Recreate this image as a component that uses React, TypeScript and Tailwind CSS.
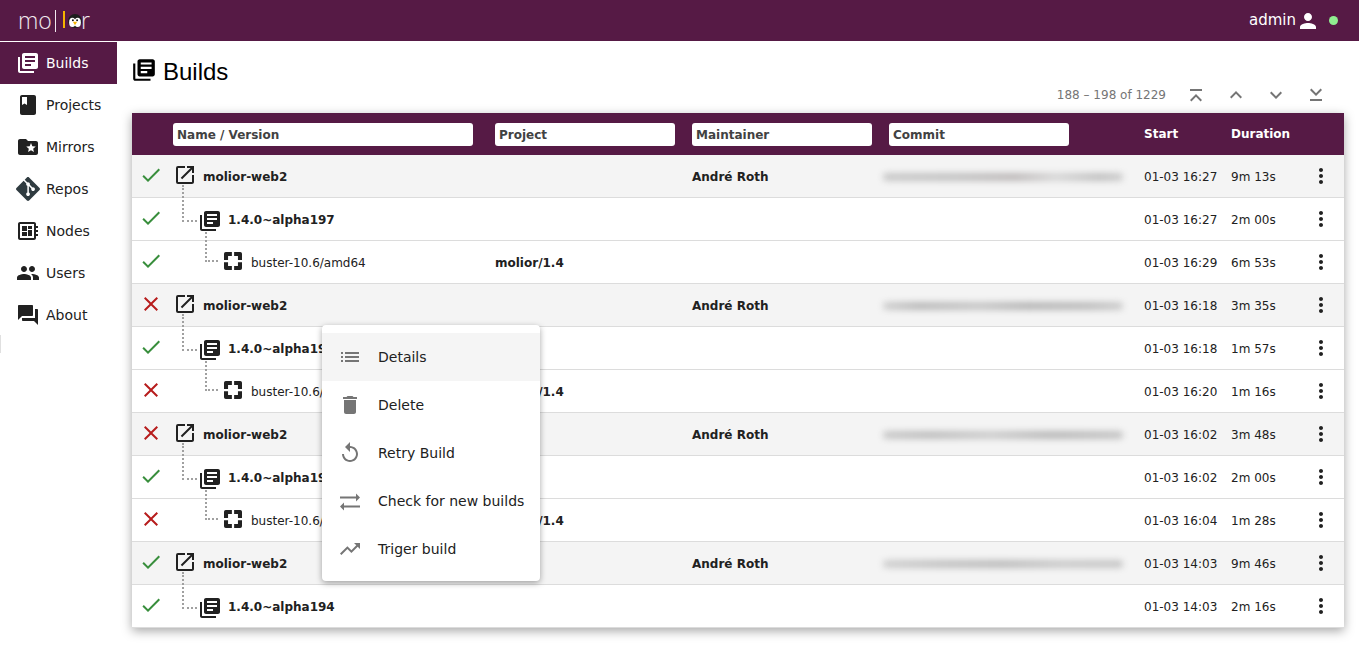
import type { ReactNode } from "react";
import {
  MdLibraryBooks,
  MdBook,
  MdFolderSpecial,
  MdDeveloperBoard,
  MdPeople,
  MdQuestionAnswer,
  MdOpenInNew,
  MdCheck,
  MdClose,
  MdMoreVert,
  MdList,
  MdDelete,
  MdReplay,
  MdTrendingUp,
  MdPerson,
  MdKeyboardArrowUp,
  MdKeyboardArrowDown,
  MdFirstPage,
  MdLastPage,
} from "react-icons/md";
import { SiGit } from "react-icons/si";

const Logo = () => (
  <div className="flex h-[41px] items-center text-[23px] leading-none text-[#f1e9ee] font-['Open_Sans',sans-serif] font-light">
    <span className="w-[32px]">mo</span>
    <span className="ml-[5px] h-[22px] w-px bg-[#f1e9ee]" />
    <span className="ml-[7px] mt-[-2px] h-[17px] w-[2px] bg-[#f5b400]" />
    <svg viewBox="0 0 20 20" className="ml-[3px] mt-[1px] h-[14px] w-[14px]">
      <circle cx="10" cy="10" r="10" fill="#1d1d1d" />
      <ellipse cx="6.2" cy="12" rx="4.6" ry="6.5" fill="#fff" />
      <ellipse cx="13.8" cy="12" rx="4.6" ry="6.5" fill="#fff" />
      <circle cx="7" cy="9" r="1.4" fill="#111" />
      <circle cx="13" cy="9" r="1.4" fill="#111" />
      <path d="M7 11h6l-3 5z" fill="#f5b400" />
    </svg>
    <span className="ml-[-1px]">r</span>
  </div>
);

const nav = [
  { label: "Builds", icon: <MdLibraryBooks size={24} />, active: true },
  { label: "Projects", icon: <MdBook size={24} /> },
  { label: "Mirrors", icon: <MdFolderSpecial size={24} /> },
  { label: "Repos", icon: <SiGit size={24} className="text-[#2f3b40]" /> },
  { label: "Nodes", icon: <MdDeveloperBoard size={24} /> },
  { label: "Users", icon: <MdPeople size={24} /> },
  { label: "About", icon: <MdQuestionAnswer size={24} /> },
];

type Kind = "source" | "version" | "deb";

type Row = {
  ok: boolean;
  kind: Kind;
  name: string;
  project?: string;
  maintainer?: string;
  start: string;
  duration: string;
  smear?: string;
};

// redacted commit hashes, each one smears a little differently
const smearA = "bg-[linear-gradient(90deg,#c8c8c8,#c2c2c2_30%,#bdb9b9_55%,#d6d6d6_72%,#c0c0c0_90%,#cccccc)]";
const smearB = "bg-[linear-gradient(90deg,#cfcfcf,#b9b9b9_15%,#c6c6c6_40%,#b6b6b6_60%,#bcbcbc_85%,#cccccc)]";
const smearC = "bg-[linear-gradient(90deg,#c9c9c9,#bdbdbd_20%,#cccccc_45%,#b8b8b8_70%,#c4c4c4)]";
const smearD = "bg-[linear-gradient(90deg,#cfcfcf,#c2c2c2_25%,#bcbcbc_50%,#cacaca_75%,#c6c6c6)]";

const rows: Row[] = [
  { ok: true, kind: "source", name: "molior-web2", maintainer: "André Roth", start: "01-03 16:27", duration: "9m 13s", smear: smearA },
  { ok: true, kind: "version", name: "1.4.0~alpha197", start: "01-03 16:27", duration: "2m 00s" },
  { ok: true, kind: "deb", name: "buster-10.6/amd64", project: "molior/1.4", start: "01-03 16:29", duration: "6m 53s" },
  { ok: false, kind: "source", name: "molior-web2", maintainer: "André Roth", start: "01-03 16:18", duration: "3m 35s", smear: smearB },
  { ok: true, kind: "version", name: "1.4.0~alpha196", start: "01-03 16:18", duration: "1m 57s" },
  { ok: false, kind: "deb", name: "buster-10.6/amd64", project: "molior/1.4", start: "01-03 16:20", duration: "1m 16s" },
  { ok: false, kind: "source", name: "molior-web2", maintainer: "André Roth", start: "01-03 16:02", duration: "3m 48s", smear: smearC },
  { ok: true, kind: "version", name: "1.4.0~alpha195", start: "01-03 16:02", duration: "2m 00s" },
  { ok: false, kind: "deb", name: "buster-10.6/amd64", project: "molior/1.4", start: "01-03 16:04", duration: "1m 28s" },
  { ok: true, kind: "source", name: "molior-web2", maintainer: "André Roth", start: "01-03 14:03", duration: "9m 46s", smear: smearD },
  { ok: true, kind: "version", name: "1.4.0~alpha194", start: "01-03 14:03", duration: "2m 16s" },
];

const cols = "grid grid-cols-[41px_322px_197px_197px_255px_87px_78px_1fr] items-center";

const DebIcon = () => (
  <svg viewBox="0 0 20 20" className="mb-[4px] h-[18px] w-[18px] text-[#212121]">
    <path
      fill="currentColor"
      fillRule="evenodd"
      d="M2 0h16a2 2 0 0 1 2 2v16a2 2 0 0 1-2 2H2a2 2 0 0 1-2-2V2a2 2 0 0 1 2-2zM8.75 0v4.5H4.5v4.25H0v2.5h4.5v4.25h4.25V20h2.5v-4.5h4.25v-4.25H20v-2.5h-4.5V4.5h-4.25V0z"
    />
  </svg>
);

const SwapIcon = () => (
  <svg viewBox="0 0 24 24" className="h-[24px] w-[24px]" fill="currentColor">
    <path d="M2 7.5h16V4.5l4 4-4 4V9.5H2zM22 16.5H6v-3l-4 4 4 4v-3h16z" />
  </svg>
);

const NameCell = ({ row }: { row: Row }) => {
  if (row.kind === "source") {
    return (
      <div className="relative flex items-center">
        <MdOpenInNew size={24} className="mb-[4px] text-[#212121]" />
        <span className="ml-[6px] font-bold text-[#212121]">{row.name}</span>
      </div>
    );
  }
  if (row.kind === "version") {
    return (
      <div className="relative flex items-center pl-[25px]">
        <span className="absolute left-[9px] top-[-22px] h-[37px] w-[15px] border-b-2 border-l-2 border-dotted border-[#a0a0a0]" />
        <MdLibraryBooks size={24} className="mt-[2px] text-[#212121]" />
        <span className="ml-[6px] font-bold text-[#212121]">{row.name}</span>
      </div>
    );
  }
  return (
    <div className="relative flex items-center pl-[51px]">
      <span className="absolute left-[32px] top-[-20px] h-[30px] w-[13px] border-b-2 border-l-2 border-dotted border-[#a0a0a0]" />
      <DebIcon />
      <span className="ml-[9px] text-[#212121]">{row.name}</span>
    </div>
  );
};

const MenuItem = ({ icon, label, hover }: { icon: ReactNode; label: string; hover?: boolean }) => (
  <div className={`flex h-[48px] items-center pl-[16px] ${hover ? "bg-[#f5f5f5]" : ""}`}>
    <span className="flex w-[40px] text-[#757575]">{icon}</span>
    <span className="text-[14px] text-[#212121]">{label}</span>
  </div>
);

export default function App() {
  return (
    <div className="relative h-[650px] w-[1359px] overflow-hidden bg-white font-['DejaVu_Sans',sans-serif] text-[#212121]">
      <header className="flex h-[41px] items-center justify-between bg-[#561a45] pl-[18px] pr-[21px]">
        <Logo />
        <div className="flex items-center text-white">
          <span className="text-[15px]">admin</span>
          <MdPerson size={24} className="ml-0" />
          <span className="ml-[9px] h-[9px] w-[9px] rounded-full bg-[#90ee90]" />
        </div>
      </header>

      <div className="flex">
        <aside className="w-[117px] shrink-0 pt-px">
          {nav.map((n) => (
            <div
              key={n.label}
              className={`flex h-[42px] items-center pl-[16px] text-[14px] ${n.active ? "bg-[#561a45] text-white" : "text-[#212121]"}`}
            >
              <span className="flex w-[30px]">{n.icon}</span>
              {n.label}
            </div>
          ))}
        </aside>

        <main className="flex-1 pl-[15px] pr-[15px]">
          <div className="flex h-[44px] items-center pt-[17px] text-black">
            <MdLibraryBooks size={26} className="mb-[4px] ml-[-1px]" />
            <h1 className="ml-[6px] text-[24px] font-normal font-['Liberation_Sans',sans-serif]">Builds</h1>
          </div>

          <div className="flex h-[28px] items-center justify-end pb-[8px] pr-[8px] text-[12px] text-[#757575]">
            <span className="mr-[10px]">188 – 198 of 1229</span>
            <span className="flex w-[40px] justify-center"><MdFirstPage size={24} className="rotate-90" /></span>
            <span className="flex w-[40px] justify-center"><MdKeyboardArrowUp size={24} /></span>
            <span className="flex w-[40px] justify-center"><MdKeyboardArrowDown size={24} /></span>
            <span className="flex w-[40px] justify-center"><MdLastPage size={24} className="rotate-90" /></span>
          </div>

          <div className="shadow-[0_3px_10px_rgba(0,0,0,0.35)]">
            <div className={`${cols} h-[42px] bg-[#561a45] text-[12px] font-bold`}>
              <span />
              <div className="h-[23px] w-[300px] rounded-[3px] bg-white pl-[4px] leading-[24px] text-[#424242]">Name / Version</div>
              <div className="h-[23px] w-[180px] rounded-[3px] bg-white pl-[4px] leading-[24px] text-[#424242]">Project</div>
              <div className="h-[23px] w-[180px] rounded-[3px] bg-white pl-[4px] leading-[24px] text-[#424242]">Maintainer</div>
              <div className="h-[23px] w-[180px] rounded-[3px] bg-white pl-[4px] leading-[24px] text-[#424242]">Commit</div>
              <span className="text-white">Start</span>
              <span className="text-white">Duration</span>
              <span />
            </div>

            {rows.map((r, i) => (
              <div
                key={i}
                className={`${cols} h-[43px] border-b border-[#dcdcdc] pt-[2px] text-[12px] ${r.kind === "source" ? "bg-[#f4f4f4]" : "bg-white"}`}
              >
                <span className="flex pb-[4px] pl-[7px]">
                  {r.ok ? (
                    <MdCheck size={24} className="text-[#388e3c]" />
                  ) : (
                    <MdClose size={24} className="text-[#b71c1c]" />
                  )}
                </span>
                <NameCell row={r} />
                <span className="font-bold">{r.project}</span>
                <span className="font-bold">{r.maintainer}</span>
                <div>
                  {r.smear && <div className={`ml-[-6px] h-[8px] w-[240px] rounded-full blur-[3px] ${r.smear}`} />}
                </div>
                <span>{r.start}</span>
                <span>{r.duration}</span>
                <MdMoreVert size={24} className="mb-[2px] text-[#212121]" />
              </div>
            ))}
          </div>
        </main>
      </div>

      <div className="absolute left-0 top-[335px] h-[18px] w-px bg-[#e0e0e0]" />

      <div className="absolute left-[322px] top-[325px] h-[256px] w-[218px] rounded-[4px] bg-white py-[8px] shadow-[0_2px_6px_rgba(0,0,0,0.35)]">
        <MenuItem hover label="Details" icon={<MdList size={24} />} />
        <MenuItem label="Delete" icon={<MdDelete size={24} />} />
        <MenuItem label="Retry Build" icon={<MdReplay size={24} />} />
        <MenuItem label="Check for new builds" icon={<SwapIcon />} />
        <MenuItem label="Triger build" icon={<MdTrendingUp size={24} />} />
      </div>
    </div>
  );
}
